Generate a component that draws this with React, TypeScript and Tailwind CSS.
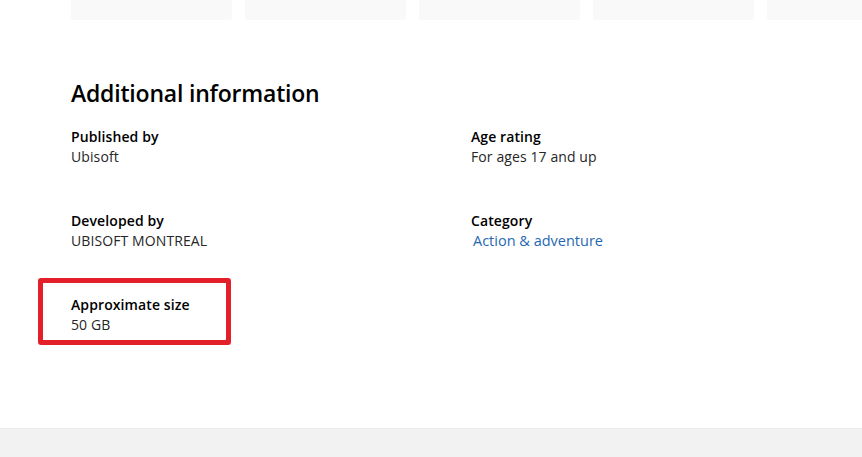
export default function App() {
  const items = [
    { label: 'Published by', value: 'Ubisoft' },
    { label: 'Age rating', value: 'For ages 17 and up' },
    { label: 'Developed by', value: 'UBISOFT MONTREAL' },
    { label: 'Category', value: 'Action & adventure', link: true },
    { label: 'Approximate size', value: '50 GB', marked: true },
  ]

  return (
    <div className="w-[862px] h-[457px] bg-white overflow-hidden flex flex-col text-[#1a1a1a]" style={{ fontFamily: '"Open Sans", "Noto Sans", sans-serif' }}>
      <div className="flex gap-[13px] pl-[71px] h-[20px]">
        {[0, 1, 2, 3, 4].map((i) => (
          <div key={i} className="w-[161px] shrink-0 h-full bg-[#f9f9f9] rounded-b-[2px]" />
        ))}
      </div>

      <div className="flex-1 pl-[71px] pt-[58px]">
        <h2 className="text-[23px] leading-[30px] font-semibold text-black tracking-[-0.2px]">Additional information</h2>

        <div className="grid grid-cols-[400px_1fr] gap-y-[44px] mt-[19px]">
          {items.map((it) => (
            <div key={it.label} className="relative h-[40px]">
              {it.marked && (
                <div className="absolute left-[-33px] top-[-17px] w-[193px] h-[67px] border-[5px] border-[#e3202a] rounded-[3px]" />
              )}
              <div className="text-[14px] leading-[20px] font-semibold text-black tracking-[0.1px]">{it.label}</div>
              {it.link ? (
                <div className="text-[14.5px] leading-[20px] font-medium text-[#1f69b3] ml-[2px]">{it.value}</div>
              ) : (
                <div className="text-[14px] leading-[20px] text-[#262626] tracking-[0.1px]">{it.value}</div>
              )}
            </div>
          ))}
        </div>
      </div>

      <div className="h-[29px] bg-[#f2f2f2] border-t border-[#ececec]" />
    </div>
  )
}
